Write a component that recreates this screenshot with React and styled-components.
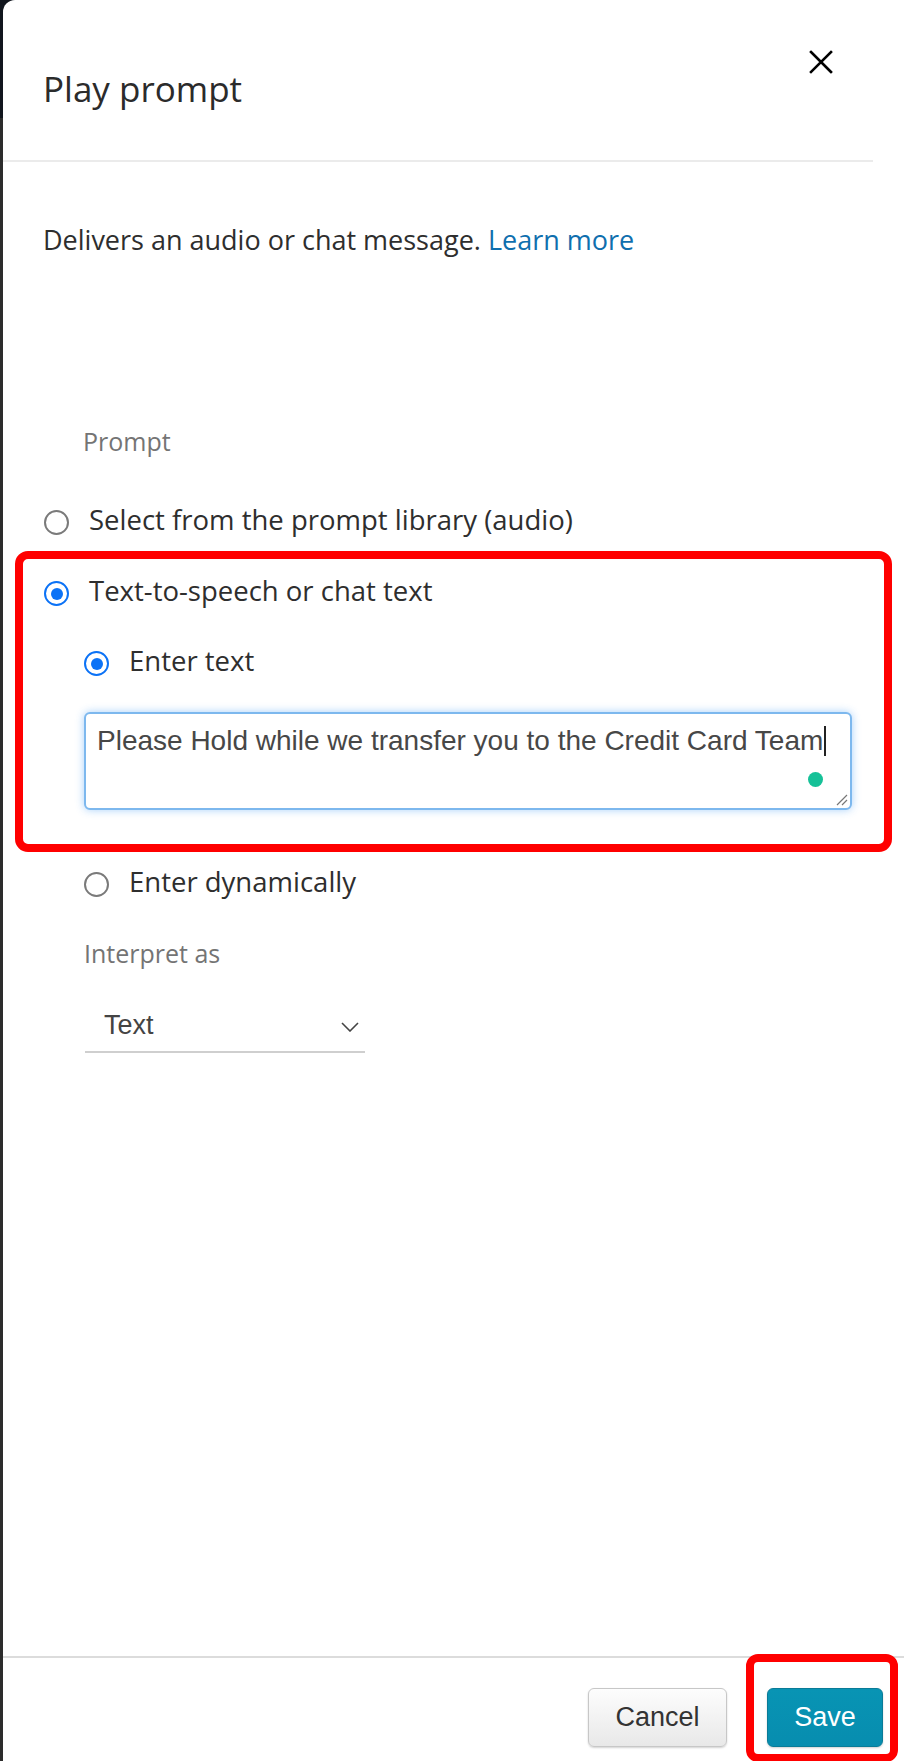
import React from "react";
import styled, { createGlobalStyle } from "styled-components";

const Global = createGlobalStyle`
  html, body { margin: 0; padding: 0; }
  body {
    background: linear-gradient(to bottom, #11161e 0, #11161e 118px, #2c2c2c 118px);
    font-family: "Open Sans", "Noto Sans", sans-serif;
  }
  * { box-sizing: border-box; }
`;

const Shell = styled.div`
  display: flex;
  height: 1761px;
  padding-left: 3px;
`;

const Panel = styled.div`
  flex: 1;
  display: flex;
  flex-direction: column;
  background: #fff;
  border-top-left-radius: 12px;
  overflow: hidden;
`;

const Header = styled.header`
  height: 162px;
  margin-right: 31px;
  padding: 0 40px 0 40px;
  border-bottom: 2px solid #ebebeb;
  display: flex;
  justify-content: space-between;
  align-items: flex-start;
`;

const Title = styled.h1`
  margin: 67px 0 0;
  font-size: 35px;
  line-height: 44px;
  font-weight: 400;
  color: #2b2b2b;
`;

const CloseButton = styled.button`
  margin-top: 50px;
  width: 24px;
  height: 24px;
  padding: 0;
  border: 0;
  background: transparent;
  display: flex;
  cursor: pointer;
`;

const Body = styled.main`
  flex: 1;
  display: flex;
  flex-direction: column;
  align-items: flex-start;
`;

const Description = styled.p`
  margin: 60px 0 0 40px;
  font-size: 27px;
  line-height: 36px;
  color: #2e2e2e;
`;

const Link = styled.a`
  color: #0f6fae;
  text-decoration: none;
`;

const FieldLabel = styled.div`
  margin: ${(p) => p.$top}px 0 0 ${(p) => p.$left}px;
  font-size: 25px;
  line-height: 32px;
  color: #747474;
`;

const RadioRow = styled.label`
  display: flex;
  align-items: flex-start;
  gap: 20px;
  margin: ${(p) => p.$top || 0}px 0 0 ${(p) => p.$left || 0}px;
  font-size: 27.5px;
  line-height: 40px;
  color: #2e2e2e;
  cursor: pointer;
`;

const RadioDot = styled.span`
  flex: none;
  position: relative;
  width: 25px;
  height: 25px;
  margin-top: 10px;
  border-radius: 50%;
  background: #fff;
  border: ${(p) => (p.$checked ? "2.5px solid #0b72f6" : "2px solid #7a7a7a")};
  &::after {
    content: "";
    display: ${(p) => (p.$checked ? "block" : "none")};
    position: absolute;
    left: 50%;
    top: 50%;
    width: 12px;
    height: 12px;
    margin: -6px 0 0 -6px;
    border-radius: 50%;
    background: #0b72f6;
  }
`;

const Highlight = styled.section`
  align-self: stretch;
  margin: 11px 12px 0 12px;
  padding: 12px 0 34px 21px;
  border: 8px solid #ff0000;
  border-radius: 13px;
`;

const Nested = styled.div`
  padding-left: 40px;
  display: flex;
  flex-direction: column;
`;

const TextBox = styled.div`
  position: relative;
  width: 768px;
  height: 98px;
  margin: 31px 0 0 0;
  padding: 9px 11px 0;
  border: 2px solid #7db8ee;
  border-radius: 6px;
  box-shadow: 0 0 9px rgba(60, 150, 245, 0.45);
  font-family: "Liberation Sans", Arial, sans-serif;
  font-size: 28px;
  line-height: 36px;
  color: #474747;
  background: #fff;
  white-space: nowrap;
`;

const Caret = styled.span`
  display: inline-block;
  width: 2px;
  height: 30px;
  margin-left: 1px;
  vertical-align: -6px;
  background: #222;
`;

const StatusDot = styled.span`
  position: absolute;
  right: 27px;
  bottom: 21px;
  width: 15px;
  height: 15px;
  border-radius: 50%;
  background: #16c198;
`;

const Grip = styled.svg`
  position: absolute;
  right: 2px;
  bottom: 2px;
`;

const Select = styled.div`
  display: flex;
  justify-content: space-between;
  align-items: flex-start;
  width: 280px;
  height: 53px;
  margin: 31px 0 0 82px;
  padding: 7px 6px 0 19px;
  border-bottom: 2px solid #cfcfcf;
  font-family: "Liberation Sans", Arial, sans-serif;
  font-size: 27px;
  line-height: 36px;
  color: #444;
  cursor: pointer;
`;

const Chevron = styled.svg`
  margin-top: 15px;
`;

const Footer = styled.footer`
  height: 105px;
  border-top: 2px solid #dcdcdc;
  padding: 30px 21px 0 0;
  display: flex;
  justify-content: flex-end;
  align-items: flex-start;
  gap: 40px;
`;

const Button = styled.button`
  height: 59px;
  width: ${(p) => p.$width}px;
  padding: 0;
  border-radius: 6px;
  font-family: "Liberation Sans", Arial, sans-serif;
  font-size: 27px;
  cursor: pointer;
  border: 1px solid ${(p) => (p.$primary ? "#0a7b97" : "#c7c7c7")};
  color: ${(p) => (p.$primary ? "#fff" : "#333")};
  background: ${(p) =>
    p.$primary
      ? "linear-gradient(to bottom, #0894b4, #078daf)"
      : "linear-gradient(to bottom, #fdfdfd, #e8e8e8)"};
  box-shadow: 0 1px 2px rgba(0, 0, 0, 0.18);
`;

const Marked = styled.div`
  position: relative;
  display: flex;
  &::after {
    content: "";
    position: absolute;
    left: -21px;
    right: -15px;
    top: -34px;
    bottom: -15px;
    border: 8px solid #ff0000;
    border-radius: 12px;
    pointer-events: none;
  }
`;

export default function App() {
  return (
    <>
      <Global />
      <Shell>
        <Panel>
          <Header>
            <Title>Play prompt</Title>
            <CloseButton aria-label="Close">
              <svg width="24" height="24" viewBox="0 0 24 24">
                <path d="M2 2 L22 22 M22 2 L2 22" stroke="#000" strokeWidth="2.6" strokeLinecap="square" fill="none" />
              </svg>
            </CloseButton>
          </Header>
          <Body>
            <Description>
              Delivers an audio or chat message. <Link href="#">Learn more</Link>
            </Description>

            <FieldLabel $top={167} $left={80}>Prompt</FieldLabel>

            <RadioRow $top={43} $left={41}>
              <RadioDot />
              Select from the prompt library (audio)
            </RadioRow>

            <Highlight>
              <RadioRow>
                <RadioDot $checked />
                Text-to-speech or chat text
              </RadioRow>
              <Nested>
                <RadioRow $top={30}>
                  <RadioDot $checked />
                  Enter text
                </RadioRow>
                <TextBox>
                  Please Hold while we transfer you to the Credit Card Team
                  <Caret />
                  <StatusDot />
                  <Grip width="14" height="14" viewBox="0 0 14 14">
                    <path d="M13 3 L3 13 M13 8 L8 13" stroke="#777" strokeWidth="1.2" fill="none" />
                  </Grip>
                </TextBox>
              </Nested>
            </Highlight>

            <RadioRow $top={10} $left={81}>
              <RadioDot />
              Enter dynamically
            </RadioRow>

            <FieldLabel $top={35} $left={81}>Interpret as</FieldLabel>

            <Select>
              <span>Text</span>
              <Chevron width="18" height="10" viewBox="0 0 18 10">
                <polyline points="1,1 9,9 17,1" stroke="#444" strokeWidth="1.6" fill="none" />
              </Chevron>
            </Select>
          </Body>
          <Footer>
            <Button $width={139}>Cancel</Button>
            <Marked>
              <Button $primary $width={116}>Save</Button>
            </Marked>
          </Footer>
        </Panel>
      </Shell>
    </>
  );
}
